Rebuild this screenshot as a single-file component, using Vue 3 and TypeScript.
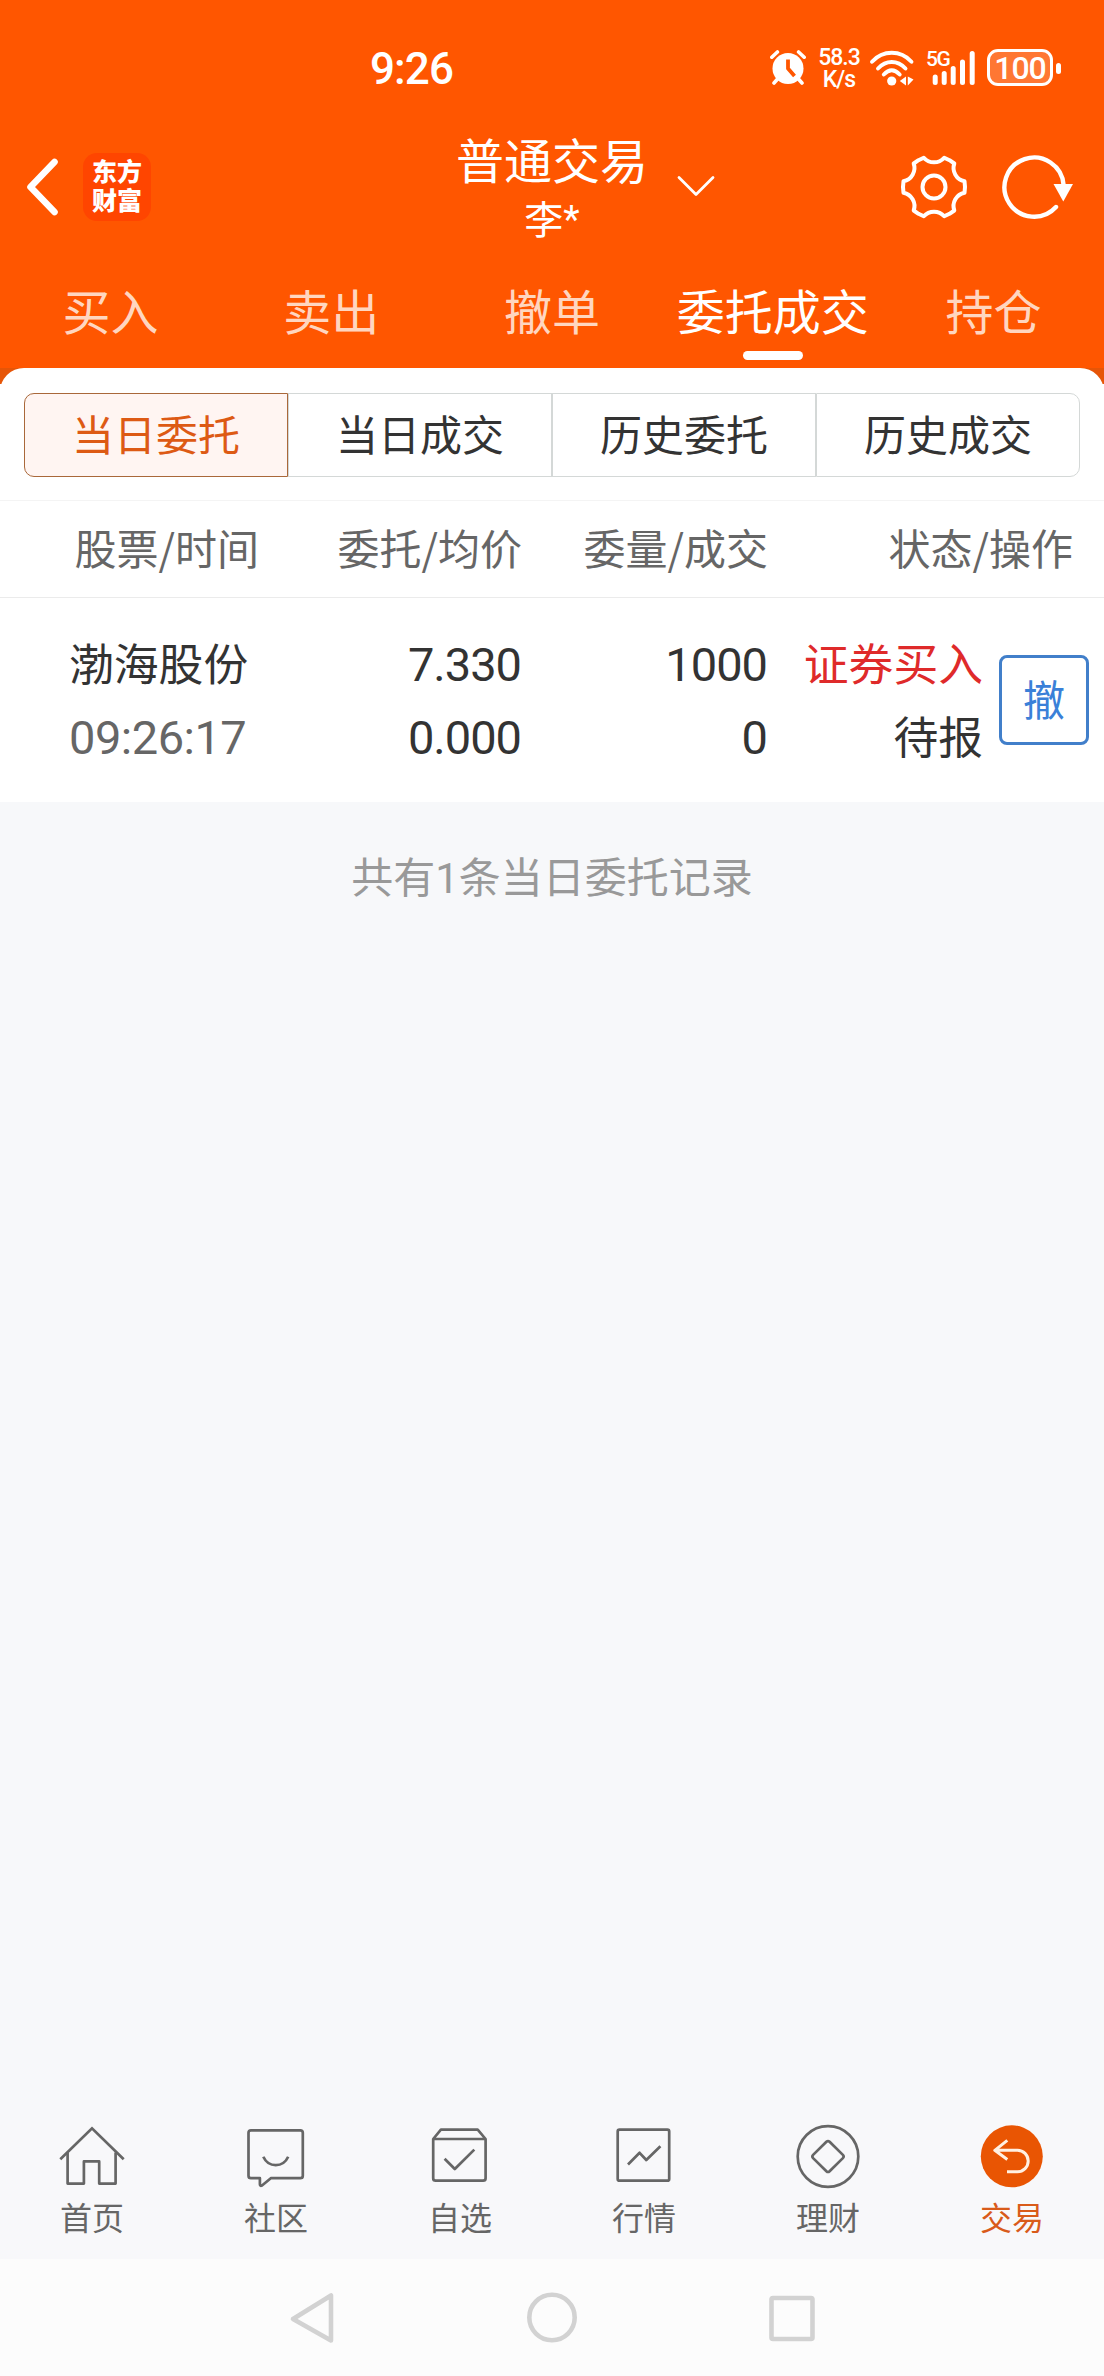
<script setup lang="ts">
import { ref } from 'vue'

interface NavItem {
  key: string
  label: string
}

interface Order {
  name: string
  time: string
  price: string
  average: string
  amount: string
  filled: string
  side: string
  state: string
}

const tabs: string[] = ['买入', '卖出', '撤单', '委托成交', '持仓']
const activeTab = ref(3)

const segments: string[] = ['当日委托', '当日成交', '历史委托', '历史成交']
const activeSegment = ref(0)

const columns: string[] = ['股票/时间', '委托/均价', '委量/成交', '状态/操作']

const orders: Order[] = [
  {
    name: '渤海股份',
    time: '09:26:17',
    price: '7.330',
    average: '0.000',
    amount: '1000',
    filled: '0',
    side: '证券买入',
    state: '待报',
  },
]

const navItems: NavItem[] = [
  { key: 'home', label: '首页' },
  { key: 'community', label: '社区' },
  { key: 'watch', label: '自选' },
  { key: 'market', label: '行情' },
  { key: 'wealth', label: '理财' },
  { key: 'trade', label: '交易' },
]
const activeNav = ref('trade')
</script>

<template>
  <div class="screen">
    <header class="top">
      <div class="status">
        <span class="clock">9:26</span>
        <div class="status-icons">
          <svg class="alarm" width="36" height="36" viewBox="0 0 36 36">
            <circle cx="18" cy="18.5" r="15.5" fill="#fff" />
            <path d="M1.8 7.2 7.4 2M34.2 7.2 28.6 2M4 33l4-4.500M32 33l-4-4.500" stroke="#fff" stroke-width="3.600" stroke-linecap="round" />
            <path d="M18 9.500V18.500L24.500 26" fill="none" stroke="#ff5600" stroke-width="3.800" stroke-linejoin="round" />
          </svg>
          <div class="speed"><span>58.3</span><span>K/s</span></div>
          <svg class="wifi" width="46" height="38" viewBox="0 0 46 38">
            <g fill="none" stroke="#fff" stroke-width="3.900" stroke-linecap="round">
              <path d="M3 12.700C14 .800 31.500 .800 42.500 12.700" />
              <path d="M9 19.500C17 10.800 28.500 10.800 36.500 19.500" />
              <path d="M14.800 25.500C20 19.800 25.500 19.800 30.700 25.500" />
            </g>
            <circle cx="22.700" cy="32" r="4.600" fill="#fff" />
            <path d="M37 27.500V36.500L30.800 32ZM38.800 27.500V36.500L44.500 30.500Z" fill="#fff" />
          </svg>
          <div class="signal">
            <span>5G</span>
            <svg width="44" height="36" viewBox="0 0 44 36">
              <path d="M5 27v5.500M14 23.500v9M23 18.500v14M32.300 12v20.500M42 3.500v29" transform="translate(-.8 0)" stroke="#fff" stroke-width="5" stroke-linecap="round" />
            </svg>
          </div>
          <div class="battery"><span>100</span></div>
          <i class="battery-tip"></i>
        </div>
      </div>

      <div class="title-bar">
        <svg class="back" width="36" height="60" viewBox="0 0 36 60">
          <path d="M30.500 5 6.500 30 30.500 55" fill="none" stroke="#fff" stroke-width="6.600" stroke-linecap="round" stroke-linejoin="round" />
        </svg>
        <div class="logo"><span>东方</span><span>财富</span></div>
        <div class="title">
          <h1>普通交易</h1>
          <p>李<span class="mask">*</span></p>
        </div>
        <svg class="chevron" width="40" height="24" viewBox="0 0 40 24">
          <path d="M3 3.500 20 20.500 37 3.500" fill="none" stroke="#fff" stroke-width="2.800" stroke-linecap="round" stroke-linejoin="round" />
        </svg>
        <svg class="gear" width="72" height="72" viewBox="-36 -36 72 72">
          <g fill="none" stroke="#fff" stroke-width="4" stroke-linejoin="round">
            <path d="M30.500 -5.800L31 0L30.500 5.800A13.500 13.500 0 0 0 20.300 23.500L15.500 26.800L10.200 29.300A13.500 13.500 0 0 0 -10.200 29.300L-15.500 26.800L-20.300 23.500A13.500 13.500 0 0 0 -30.500 5.800L-31 0L-30.500 -5.800A13.500 13.500 0 0 0 -20.300 -23.500L-15.500 -26.800L-10.200 -29.300A13.500 13.500 0 0 0 10.200 -29.300L15.500 -26.800L20.300 -23.500A13.500 13.500 0 0 0 30.500 -5.800Z" />
            <circle r="11.500" />
          </g>
        </svg>
        <svg class="refresh" width="76" height="72" viewBox="-36 -36 76 72">
          <path d="M22 20A29.600 29.600 0 1 1 29.600 -2" fill="none" stroke="#fff" stroke-width="4.400" stroke-linecap="round" />
          <path d="M19.500 -3H39L29.300 14.500Z" fill="#fff" />
        </svg>
      </div>

      <nav class="tabs">
        <button v-for="(tab, i) in tabs" :key="tab" :class="['tab', { active: i === activeTab }]" @click="activeTab = i">
          {{ tab }}
        </button>
      </nav>
    </header>

    <section class="sheet-wrap">
      <div class="sheet">
        <div class="segments">
          <button
            v-for="(segment, i) in segments"
            :key="segment"
            :class="['segment', { active: i === activeSegment }]"
            @click="activeSegment = i"
          >
            {{ segment }}
          </button>
        </div>

        <div class="grid head">
          <span v-for="column in columns" :key="column">{{ column }}</span>
        </div>

        <div v-for="order in orders" :key="order.time" class="grid order">
          <div class="cell name"><b>{{ order.name }}</b><span class="num time">{{ order.time }}</span></div>
          <div class="cell"><span class="num">{{ order.price }}</span><span class="num">{{ order.average }}</span></div>
          <div class="cell"><span class="num">{{ order.amount }}</span><span class="num">{{ order.filled }}</span></div>
          <div class="cell state"><span class="buy">{{ order.side }}</span><span>{{ order.state }}</span></div>
          <button class="cancel">撤</button>
        </div>
      </div>
    </section>

    <main class="rest">
      <p>共有<span class="count">{{ orders.length }}</span>条当日委托记录</p>
    </main>

    <nav class="bottom-nav">
      <a v-for="item in navItems" :key="item.key" :class="['nav-item', { active: item.key === activeNav }]" @click="activeNav = item.key">
        <svg width="72" height="72" viewBox="0 0 72 72" fill="none" stroke="currentColor" stroke-width="2.700" stroke-linejoin="round">
          <template v-if="item.key === 'home'">
            <path d="M4.300 39.200 36 8.300 67.700 39.200" stroke-linejoin="miter" />
            <path d="M11.600 32.500V63.600H27.900V41.400H43.200V63.600H59.600V32.500" />
          </template>
          <template v-else-if="item.key === 'community'">
            <path d="M11 10.300H60.300Q62.800 10.300 62.800 12.800V55.700Q62.800 58.200 60.300 58.200H30.800L22 65.500Q19.900 66.500 19.900 64.300V58.200H11Q8.500 58.200 8.500 55.700V12.800Q8.500 10.300 11 10.300Z" />
            <path d="M23.300 36.800C28.500 48 43 48 48.200 36.800" />
          </template>
          <template v-else-if="item.key === 'watch'">
            <path d="M9.200 19 16.900 9.700H53.700L61.600 19V58.200Q61.600 60.700 59.100 60.700H11.700Q9.200 60.700 9.200 58.200ZM9.200 19H61.600" />
            <path d="M20.600 38.700 30.800 49 50.300 29.600" />
          </template>
          <template v-else-if="item.key === 'market'">
            <rect x="9.700" y="9.700" width="51.500" height="51" rx="1.800" />
            <path d="M20 44.500 31.600 32.800 38.300 40 52.400 26.200" />
          </template>
          <template v-else-if="item.key === 'wealth'">
            <circle cx="36" cy="36.500" r="30.300" />
            <path d="M34.400 21.800Q36 20.300 37.600 21.800L50.900 34.900Q52.400 36.500 50.900 38.100L37.600 51.200Q36 52.700 34.400 51.200L21.100 38.100Q19.600 36.500 21.100 34.900Z" />
          </template>
          <template v-else>
            <circle cx="35.800" cy="36.300" r="31" fill="#e95503" stroke="none" />
            <path d="M31.300 20.300 18.800 30.300 31.300 39.500M19.500 30.300H41.500A10.700 10.700 0 0 1 41.500 51.700H31" stroke="#fff0e2" stroke-width="3" />
          </template>
        </svg>
        <span>{{ item.label }}</span>
      </a>
    </nav>

    <footer class="system">
      <svg width="60" height="60" viewBox="0 0 60 60"><path d="M49 7.500V52.500L11 31Z" /></svg>
      <svg width="60" height="60" viewBox="0 0 60 60"><circle cx="30" cy="29.500" r="22.700" /></svg>
      <svg width="60" height="60" viewBox="0 0 60 60"><rect x="9.500" y="10" width="41" height="41" rx="1.500" /></svg>
    </footer>
  </div>
</template>

<style>
body {
  margin: 0;
}
</style>

<style scoped>
.screen {
  display: flex;
  flex-direction: column;
  width: 1104px;
  height: 2376px;
  overflow: hidden;
  background: #f7f8fa;
  color: #333;
  font-family: 'Noto Sans CJK SC', sans-serif;
}

button {
  margin: 0;
  padding: 0;
  border: 0;
  background: none;
  color: inherit;
  font-family: inherit;
}

h1,
p {
  margin: 0;
  font-weight: 400;
}

svg {
  display: block;
  flex: none;
}

.top {
  height: 368px;
  flex: none;
  display: flex;
  flex-direction: column;
  background: #ff5600;
  color: #fff;
}

.status {
  height: 136px;
  flex: none;
  display: flex;
  justify-content: space-between;
  align-items: center;
  box-sizing: border-box;
  padding: 0 43px 0 370px;
}

.clock {
  margin-top: 1px;
  font: 500 44px/50px Roboto, sans-serif;
  letter-spacing: -0.900px;
}

.status-icons {
  display: flex;
  align-items: center;
  font-family: Roboto, sans-serif;
  font-weight: 500;
}

.speed {
  display: flex;
  flex-direction: column;
  align-items: center;
  width: 42px;
  margin: 1px 0 0 12px;
  font-size: 23px;
  font-weight: 500;
  line-height: 22px;
  letter-spacing: -1px;
}

.wifi {
  margin: -1px 0 0 9px;
}

.signal {
  display: flex;
  align-items: flex-start;
  margin-left: 11px;
  height: 36px;
}

.signal span {
  width: 5px;
  font-size: 21px;
  line-height: 18px;
  letter-spacing: -1.500px;
  white-space: nowrap;
}

.battery {
  box-sizing: border-box;
  width: 66px;
  height: 37px;
  margin: -1px 0 0 12px;
  border: 3px solid #fff;
  border-radius: 11px;
  background: rgba(255, 255, 255, 0.2);
  font-size: 32px;
  font-weight: 500;
  line-height: 32px;
  text-align: center;
  letter-spacing: -1px;
}

.battery-tip {
  width: 5px;
  height: 11px;
  margin-left: 3px;
  border-radius: 3px;
  background: #fff;
}

.title-bar {
  height: 110px;
  flex: none;
  display: flex;
  align-items: flex-start;
  padding-left: 24px;
}

.back {
  margin-top: 21px;
}

.logo {
  box-sizing: border-box;
  width: 68px;
  height: 68px;
  margin: 17px 0 0 23px;
  padding-top: 3px;
  border-radius: 14px;
  background: #ff4500;
  display: flex;
  flex-direction: column;
  align-items: center;
  font-size: 25px;
  font-weight: 900;
  line-height: 29px;
}

.title {
  width: 192px;
  margin: -3px 0 0 305px;
  text-align: center;
}

.title h1 {
  font-size: 48px;
  line-height: 50px;
}

.title p {
  height: 42px;
  margin-top: 13px;
  font-size: 39px;
  line-height: 42px;
}

.mask {
  font-family: Roboto, sans-serif;
  font-size: 38px;
  line-height: 1px;
  vertical-align: 1px;
}

.chevron {
  margin: 38px 0 0 28px;
}

.gear {
  margin: 15px 0 0 182px;
}

.refresh {
  margin: 15px 0 0 28px;
}

.tabs {
  display: flex;
  flex: 1;
}

.tab {
  flex: 1;
  display: flex;
  flex-direction: column;
  align-items: center;
  padding-top: 37px;
  font-size: 48px;
  line-height: 52px;
  white-space: nowrap;
  color: #ffd6c0;
}

.tab.active {
  color: #fff;
}

.tab.active::after {
  content: '';
  width: 60px;
  height: 9px;
  margin-top: 16px;
  border-radius: 4.500px;
  background: #fff;
}

.sheet-wrap {
  flex: none;
  background: linear-gradient(#e65507 16px, #fff 16px);
}

.sheet {
  background: #fff;
  border-radius: 24px 24px 0 0;
  padding-top: 25px;
}

.segments {
  display: flex;
  height: 84px;
  margin: 0 24px 23px;
}

.segment {
  box-sizing: border-box;
  flex: 1;
  border: 1px solid #d4d8d7;
  padding-bottom: 5px;
  font-size: 42px;
  line-height: 77px;
  color: #333;
}

.segment:first-child {
  border-radius: 10px 0 0 10px;
}

.segment:last-child {
  border-radius: 0 10px 10px 0;
}

.segment.active {
  border-color: #a9683a;
  background: #fff5f2;
  color: #dd5a14;
}

.grid {
  display: grid;
  grid-template-columns: 262px 260px 246px 305px;
}

.head {
  height: 96px;
  border-top: 1px solid #f4f4f4;
  border-bottom: 1px solid #ebebeb;
  font-size: 42px;
  line-height: 91px;
  color: #666;
  text-align: right;
}

.head span:first-child {
  padding-right: 3px;
}

.order {
  height: 204px;
  box-sizing: border-box;
  padding-top: 27px;
  grid-template-columns: 260px 261px 246px 216px 106px;
  font-size: 44.800px;
  line-height: 73px;
}

.cell {
  display: flex;
  flex-direction: column;
  align-items: flex-end;
}

.cell > * {
  height: 73px;
}

.name {
  align-items: flex-start;
  padding-left: 69px;
}

.name b {
  font-weight: 400;
}

.num {
  font-family: Roboto, sans-serif;
  font-size: 47px;
  line-height: 79px;
  letter-spacing: -1px;
}

.time {
  color: #666;
  letter-spacing: -0.500px;
}

.buy {
  color: #df2a2a;
}

.cancel {
  justify-self: end;
  box-sizing: border-box;
  width: 90px;
  height: 90px;
  margin-top: 30px;
  padding-bottom: 5px;
  border: 3px solid #417fca;
  border-radius: 8px;
  font-size: 42px;
  line-height: 79px;
  color: #3a80d8;
}

.rest {
  flex: 1;
  padding-top: 48px;
  text-align: center;
  font-size: 42px;
  line-height: 50px;
  color: #999;
}

.count {
  font-family: Roboto, sans-serif;
}

.bottom-nav {
  flex: none;
  display: flex;
  height: 139px;
  background: #f8f8fa;
}

.nav-item {
  flex: 1;
  display: flex;
  flex-direction: column;
  align-items: center;
  color: #666;
  font-size: 32px;
  line-height: 36px;
}

.nav-item span {
  margin-top: 6px;
}

.nav-item.active {
  color: #d95b1a;
}

.system {
  flex: none;
  height: 117px;
  display: flex;
  justify-content: center;
  align-items: center;
  gap: 180px;
  background: #fcfcfc;
}

.system svg {
  fill: none;
  stroke: #d2d2d2;
  stroke-width: 4.600px;
  stroke-linejoin: round;
}
</style>
